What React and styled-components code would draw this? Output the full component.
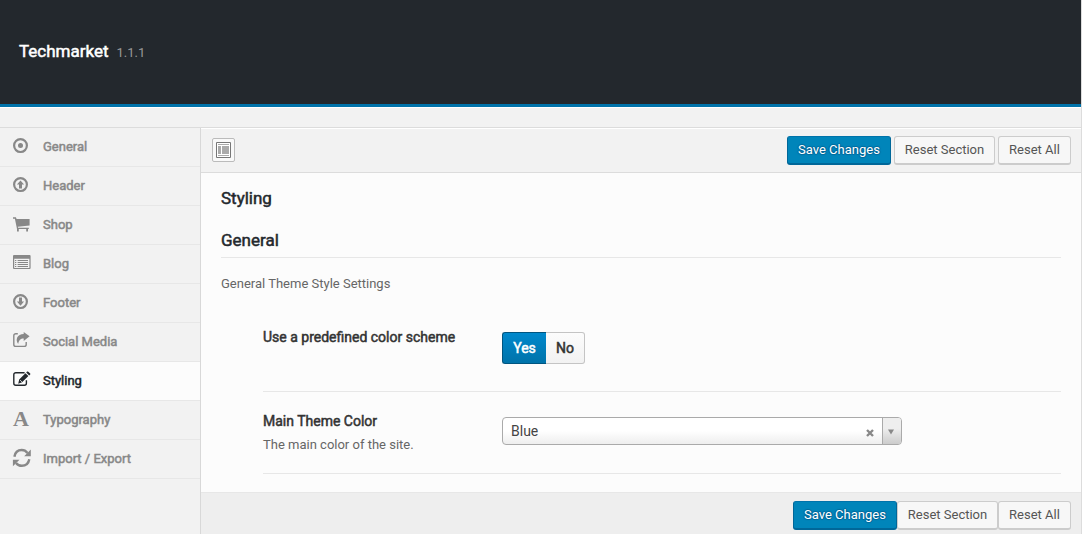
import React from "react";
import styled, { createGlobalStyle, css } from "styled-components";

const GlobalStyle = createGlobalStyle`
  * { box-sizing: border-box; }
  body {
    margin: 0;
    background: #f2f2f2;
    font-family: Roboto, "Liberation Sans", sans-serif;
    font-size: 13px;
    color: #555;
    overflow: hidden;
  }
  h1, h2, h3, p { margin: 0; font-weight: 400; }
  button { font-family: inherit; }
`;

const heavy = css`
  font-weight: 400;
  -webkit-text-stroke: 0.5px currentColor;
`;

const Panel = styled.div`
  width: 1082px;
  height: 534px;
  display: flex;
  flex-direction: column;
  border-right: 1px solid #dcdcdc;
  overflow: hidden;
`;

const Header = styled.header`
  height: 107px;
  flex: none;
  padding: 40px 19px 0;
  background: #23282d;
  border-bottom: 3px solid #0073aa;
  display: flex;
  align-items: baseline;
  gap: 8px;
`;

const Brand = styled.h1`
  ${heavy}
  font-size: 17px;
  line-height: 22px;
  color: #fff;
`;

const Version = styled.span`
  font-size: 13px;
  color: #999;
`;

const InfoBar = styled.div`
  height: 21px;
  flex: none;
  background: #f2f2f2;
  border-top: 1px solid #fff;
  border-bottom: 1px solid #dcdcdc;
`;

const Body = styled.div`
  flex: 1;
  display: flex;
  min-height: 0;
`;

const Sidebar = styled.nav`
  width: 201px;
  flex: none;
  border-right: 1px solid #d8d8d8;
  background: #f2f2f2;
`;

const NavItem = styled.a`
  display: flex;
  align-items: center;
  height: 39px;
  padding: 0 12px;
  border-bottom: 1px solid #e7e7e7;
  color: ${(p) => (p.$active ? "#23282d" : "#888")};
  background: ${(p) => (p.$active ? "#fcfcfc" : "transparent")};
  svg { flex: none; width: 20px; height: 20px; margin: -2px 11px 0 0; overflow: visible; }
`;

const NavLabel = styled.span`
  ${heavy}
  font-size: 13px;
  line-height: 18px;
`;

const Main = styled.main`
  flex: 1;
  min-width: 0;
  display: flex;
  flex-direction: column;
  background: #fcfcfc;
`;

const Toolbar = styled.div`
  display: flex;
  flex: none;
  justify-content: ${(p) => (p.$bottom ? "flex-end" : "space-between")};
  align-items: flex-start;
  height: ${(p) => (p.$bottom ? "42px" : "45px")};
  padding: ${(p) => (p.$bottom ? "8px 10px 0" : "7px 10px 0 11px")};
  background: ${(p) => (p.$bottom ? "#eee" : "#f2f2f2")};
  border-top: 1px solid ${(p) => (p.$bottom ? "#e7e7e7" : "#fff")};
  border-bottom: ${(p) => (p.$bottom ? "0" : "1px solid #dcdcdc")};
`;

const Actions = styled.div`
  display: flex;
  gap: ${(p) => p.$gap || 0}px;
`;

const Button = styled.button`
  height: 29px;
  width: ${(p) => p.$width}px;
  padding: 0;
  font-size: 13px;
  line-height: 24px;
  white-space: nowrap;
  text-align: center;
  border-radius: 3px;
  border: 1px solid #ccc;
  border-bottom-width: 2px;
  background: #f7f7f7;
  color: #555;
  ${(p) =>
    p.$primary &&
    css`
      background: #0085ba;
      border-color: #0073aa #006799 #006799;
      color: #fff;
      text-shadow: 0 -1px 1px #006799, 1px 0 1px #006799, 0 1px 1px #006799, -1px 0 1px #006799;
    `}
`;

const ExpandButton = styled.button`
  width: 23px;
  height: 24px;
  margin-top: 2px;
  padding: 0;
  display: flex;
  align-items: center;
  justify-content: center;
  border: 1px solid #bbb;
  border-radius: 2px;
  background: #f9f9f9;
`;

const Content = styled.section`
  flex: 1;
  min-height: 0;
  padding: 14px 20px 0;
`;

const Title = styled.h2`
  ${heavy}
  font-size: 17px;
  line-height: 22px;
  color: #23282d;
`;

const Subtitle = styled(Title)`
  margin-top: 20px;
  padding-bottom: 6px;
  border-bottom: 1px solid #e7e7e7;
`;

const Description = styled.p`
  font-size: 13px;
  line-height: 19px;
  color: #666;
  ${(p) => p.$intro && "margin-top: 16px;"}
`;

const Fields = styled.div`
  margin: 19px 0 0 42px;
`;

const Field = styled.div`
  display: grid;
  grid-template-columns: 239px 1fr;
  height: ${(p) => p.$height}px;
  padding-top: ${(p) => p.$top}px;
  border-bottom: 1px solid #e7e7e7;
`;

const FieldTitle = styled.h3`
  ${heavy}
  font-size: 14px;
  line-height: 20px;
  color: #333;
  margin-bottom: 4px;
`;

const Switch = styled.div`
  display: flex;
  height: 32px;
  width: 83px;
  margin-top: 5px;
`;

const SwitchOption = styled.span`
  ${heavy}
  width: ${(p) => (p.$on ? 44 : 39)}px;
  font-size: 14px;
  line-height: 30px;
  text-align: center;
  border: 1px solid #c4c4c4;
  border-left: 0;
  border-radius: 0 3px 3px 0;
  background: linear-gradient(#fcfcfc, #f2f2f2);
  color: #333;
  ${(p) =>
    p.$on &&
    css`
      color: #fff;
      background: linear-gradient(#0088cc, #0073aa);
      border: 1px solid #005580;
      border-right: 0;
      border-radius: 3px 0 0 3px;
    `}
`;

const Select = styled.div`
  display: flex;
  width: 400px;
  height: 28px;
  margin-top: 6px;
  border: 1px solid #aaa;
  border-radius: 4px;
  overflow: hidden;
  background: linear-gradient(#fff 50%, #eee);
`;

const SelectValue = styled.span`
  flex: 1;
  padding-left: 8px;
  font-size: 14px;
  line-height: 26px;
  color: #444;
`;

const ClearMark = styled.span`
  display: flex;
  align-items: center;
  padding: 4px 8px 0 0;
`;

const SelectArrow = styled.span`
  width: 19px;
  padding: 2px 2px 0 0;
  display: flex;
  align-items: center;
  justify-content: center;
  border-left: 1px solid #aaa;
  background: linear-gradient(#eee 40%, #ccc);
`;

const ICONS = {
  target: (
    <>
      <circle cx="8.5" cy="9.6" r="6.4" fill="none" stroke="currentColor" strokeWidth="2.2" />
      <circle cx="8.5" cy="9.6" r="2.5" />
    </>
  ),
  up: (
    <>
      <circle cx="8.5" cy="9.6" r="6.4" fill="none" stroke="currentColor" strokeWidth="2.2" />
      <path d="M8.5 5.5 12.1 9.6H10v4H7v-4H4.9z" />
    </>
  ),
  down: (
    <>
      <circle cx="8.5" cy="9.6" r="6.4" fill="none" stroke="currentColor" strokeWidth="2.2" />
      <path d="M8.5 13.7 12.1 9.6H10v-4H7v4H4.9z" />
    </>
  ),
  cart: (
    <>
      <path d="M1 3.3h2.9L4.6 5h13v6.4L5.8 12.8l.3 1h10.7V15H5L2.9 4.8H1z" />
      <path d="M5 15h1.8v2.5H5zM14.2 15H16v2.5h-1.8z" />
    </>
  ),
  list: (
    <>
      <path
        fillRule="evenodd"
        d="M2 2h15.6a1 1 0 0 1 1 1v12a1 1 0 0 1-1 1H2a1 1 0 0 1-1-1V3a1 1 0 0 1 1-1zm.2 3.8V15h15.2V5.8z"
      />
      <path d="M3 7h1.3v1H3zM3 9h1.3v1H3zM3 11h1.3v1H3zM3 13h1.3v1H3zM5.6 7H16v1H5.6zM5.6 9H16v1H5.6zM5.6 11H16v1H5.6zM5.6 13H16v1H5.6z" />
    </>
  ),
  share: (
    <>
      <path
        d="M5.8 2.7H3.8a2 2 0 0 0-2 2v8.7a2 2 0 0 0 2 2h8.4a2 2 0 0 0 2-2v-2.3"
        fill="none"
        stroke="currentColor"
        strokeWidth="1.4"
      />
      <path d="M11.7.9 17.6 5.3l-5.9 4.7V7.5C8.7 7.4 7 8.8 6.2 12.9 2.8 8.4 5.4 3 11.7 2.9z" />
    </>
  ),
  edit: (
    <>
      <path
        d="M12.6 2.7H3.8a2 2 0 0 0-2 2v8.6a2 2 0 0 0 2 2h8.6a2 2 0 0 0 2-2v-3"
        fill="none"
        stroke="currentColor"
        strokeWidth="1.4"
      />
      <path d="m13.4 3.2 3 2.8-6.3 6.3-3.9 1.4 1-4.1zM14.2 2.5l.9-.9q.6-.4 1.2.1l1.9 1.7q.4.6 0 1.1l-1 .9z" />
      <path d="m8 10 2 2" stroke="#fcfcfc" strokeWidth=".7" />
    </>
  ),
  refresh: (
    <>
      <path
        d="M2.4 8.7C3.1 4.3 6.1 2 9.7 2c2.4 0 4.3 1 5.8 2.9M17.3 11.2c-.8 4.3-4 6.6-7.5 6.6-2.4 0-4.3-1-5.8-2.9"
        fill="none"
        stroke="currentColor"
        strokeWidth="2.4"
      />
      <path d="M18.8 1.6v6.6h-6.6zM.9 18.3v-6.6h6.6z" />
    </>
  ),
};

const LetterIcon = styled.span`
  width: 20px;
  margin: -3px 11px 0 0;
  text-indent: 1px;
  font: 700 22px/20px "Liberation Serif", serif;
`;

function NavIcon({ name }) {
  if (name === "letter") return <LetterIcon>A</LetterIcon>;
  return (
    <svg viewBox="0 0 20 20" fill="currentColor">
      {ICONS[name]}
    </svg>
  );
}

const SECTIONS = [
  ["General", "target"],
  ["Header", "up"],
  ["Shop", "cart"],
  ["Blog", "list"],
  ["Footer", "down"],
  ["Social Media", "share"],
  ["Styling", "edit"],
  ["Typography", "letter"],
  ["Import / Export", "refresh"],
];

function FormActions({ gap }) {
  return (
    <Actions $gap={gap}>
      <Button $primary $width={104}>Save Changes</Button>
      <Button $width={101}>Reset Section</Button>
      <Button $width={73}>Reset All</Button>
    </Actions>
  );
}

export default function App() {
  return (
    <>
      <GlobalStyle />
      <Panel>
        <Header>
          <Brand>Techmarket</Brand>
          <Version>1.1.1</Version>
        </Header>
        <InfoBar />
        <Body>
          <Sidebar>
            {SECTIONS.map(([label, icon]) => (
              <NavItem key={label} $active={label === "Styling"}>
                <NavIcon name={icon} />
                <NavLabel>{label}</NavLabel>
              </NavItem>
            ))}
          </Sidebar>
          <Main>
            <Toolbar>
              <ExpandButton aria-label="Expand">
                <svg width="15" height="16" viewBox="0 0 15 16">
                  <path d="M.5.5h14v15H.5z" fill="#fff" stroke="#777" />
                  <path d="M2 2h11v1H2zM2 4h3v8H2zM6 4h7v8H6zM2 13h11v1H2z" fill="#aaa" />
                </svg>
              </ExpandButton>
              <FormActions gap={3} />
            </Toolbar>
            <Content>
              <Title>Styling</Title>
              <Subtitle>General</Subtitle>
              <Description $intro>General Theme Style Settings</Description>
              <Fields>
                <Field $height={80} $top={15}>
                  <FieldTitle>Use a predefined color scheme</FieldTitle>
                  <Switch>
                    <SwitchOption $on>Yes</SwitchOption>
                    <SwitchOption>No</SwitchOption>
                  </Switch>
                </Field>
                <Field $height={82} $top={19}>
                  <div>
                    <FieldTitle>Main Theme Color</FieldTitle>
                    <Description>The main color of the site.</Description>
                  </div>
                  <Select>
                    <SelectValue>Blue</SelectValue>
                    <ClearMark>
                      <svg width="8" height="8" viewBox="0 0 8 8">
                        <path d="m1 1 6 6m0-6L1 7" stroke="#888" strokeWidth="2.4" />
                      </svg>
                    </ClearMark>
                    <SelectArrow>
                      <svg width="6" height="6" viewBox="0 0 6 6">
                        <path d="M0 .5h6L3 5.5z" fill="#888" />
                      </svg>
                    </SelectArrow>
                  </Select>
                </Field>
              </Fields>
            </Content>
            <Toolbar $bottom>
              <FormActions gap={0} />
            </Toolbar>
          </Main>
        </Body>
      </Panel>
    </>
  );
}
